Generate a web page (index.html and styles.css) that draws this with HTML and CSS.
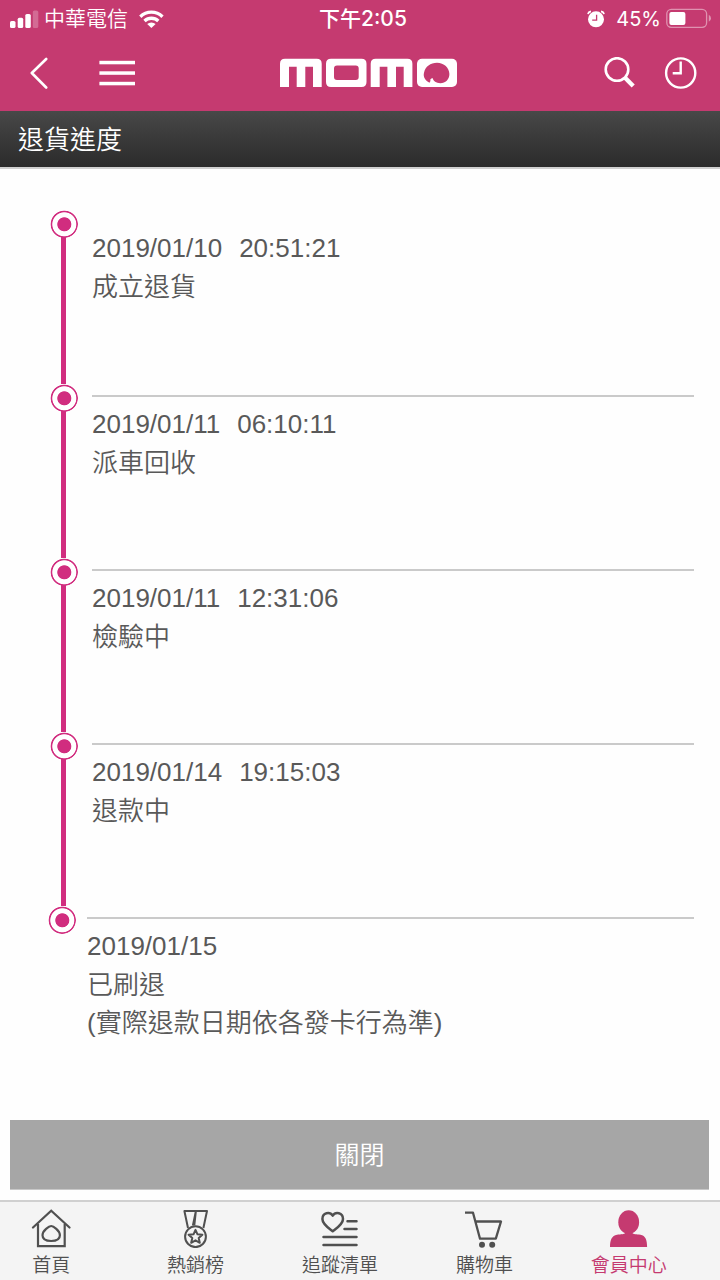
FILE: index.html
```html
<!DOCTYPE html>
<html lang="zh-Hant">

<head>
  <meta charset="UTF-8" />
  <meta name="viewport" content="width=device-width, initial-scale=1.0" />
  <title>退貨進度</title>
  <link rel="stylesheet" href="styles.css">
</head>

<body>
  <div class="container">
    <header class="head">
      <div class="status">
        <div class="status-left">
          <svg class="signal" viewBox="10 8 29 18" width="29" height="18" fill="#fff">
            <rect x="10" y="19" width="5.5" height="7" rx="1.6" />
            <rect x="17.7" y="15.7" width="5.5" height="10.3" rx="1.6" />
            <rect x="25.3" y="12" width="5.5" height="14" rx="1.6" />
            <rect x="32.8" y="8.5" width="5.5" height="17.5" rx="1.6" opacity=".25" />
          </svg>
          <span class="carrier">中華電信</span>
          <svg class="wifi" viewBox="139 8 25 18" width="25" height="18" fill="none" stroke="#fff" stroke-width="3.3">
            <path d="M140.300 14.700a16 16 0 0 1 22.200 0" />
            <path d="M144.500 19a10 10 0 0 1 13.800 0" />
            <path d="M147.200 22.100a6 6 0 0 1 8.400 0L151.400 26Z" fill="#fff" stroke="none" />
          </svg>
        </div>
        <time class="clock">下午2:05</time>
        <div class="status-right">
          <svg class="alarm" viewBox="588 8 18 18" width="18" height="18">
            <circle cx="597" cy="17.300" r="8" fill="#fff" />
            <path d="M589 12.200q.4-2.400 3-2.800M605 12.200q-.4-2.400-3-2.800" stroke="#fff" stroke-width="1.600" fill="none" />
            <path d="M597.600 12.800v5.400h-4.400" stroke="#c53a70" stroke-width="1.300" fill="none" />
          </svg>
          <span class="percent">45%</span>
          <svg class="battery" viewBox="666 7 46 21" width="46" height="21">
            <rect x="666.800" y="8.300" width="39.800" height="18" rx="4.500" fill="none" stroke="#fff" stroke-width="1.300" opacity=".45" />
            <rect x="669.400" y="11" width="16" height="13" rx="2" fill="#fff" />
            <path d="M708.800 13.800q2.200 1 2.200 3.500t-2.200 3.500Z" fill="#fff" opacity=".45" />
          </svg>
        </div>
      </div>
      <div class="bar">
        <div class="bar-left">
          <svg viewBox="30 57 18 32" width="18" height="32" fill="none" stroke="#fff" stroke-width="2.600" stroke-linecap="round" stroke-linejoin="round">
            <path d="M46.200 59L31.800 73l14.400 14.500" />
          </svg>
          <svg viewBox="99 60 36 26" width="36" height="26" fill="#fff">
            <rect x="99.400" y="60.800" width="35.600" height="3.500" />
            <rect x="99.400" y="71.300" width="35.600" height="3.500" />
            <rect x="99.400" y="81.800" width="35.600" height="3.500" />
          </svg>
        </div>
        <svg class="logo" viewBox="280 58 178 30" width="178" height="30" fill="#fff" role="img" aria-label="momo">
          <path d="M280 87V63.700q0-5 5-5h31.700q5 0 5 5V87H313V66.800h-7.700V87h-8.600V66.800H289V87Z" />
          <path fill-rule="evenodd" d="M331 58.700h30.500q5 0 5 5V82q0 5-5 5H331q-5 0-5-5V63.700q0-5 5-5ZM337 65.600q-3 0-3 3v8.500q0 3 3 3h18.700q3 0 3-3v-8.500q0-3-3-3Z" />
          <path d="M370.700 87V63.700q0-5 5-5h31.700q5 0 5 5V87h-8.700V66.800H396V87h-8.600V66.800h-7.700V87Z" />
          <rect x="417" y="58.700" width="40" height="28.300" rx="5" />
          <path d="M429.500 82.700C424.800 80.400 423 76.500 424 72.700 425.300 66.500 430.500 62.700 437 62.700c7 0 12.400 5 12.400 11.300 0 5.500-4 9.200-9 9.200-4.300 0-7.200-2-7.600-4.900q-1.200-.4-2.500 1.200.7 1.200-.8 3.200Z" fill="#c53a70" />
        </svg>
        <div class="bar-right">
          <svg viewBox="604 57 32 32" width="32" height="32" fill="none" stroke="#fff">
            <circle cx="617" cy="69.500" r="11.300" stroke-width="2.600" />
            <path d="M624.800 77.400l8.400 8.700" stroke-width="4.300" />
          </svg>
          <svg viewBox="664 57 33 32" width="33" height="32" fill="none" stroke="#fff" stroke-width="2.400">
            <circle cx="680.700" cy="73" r="14.600" />
            <path d="M680.700 61.500v11.800h-8" />
          </svg>
        </div>
      </div>
    </header>

    <h1 class="title">退貨進度</h1>

    <main>
      <ol class="timeline">
        <li class="step">
          <div class="marker"><span class="dot"></span></div>
          <div class="info">
            <div><time>2019/01/10</time><time class="hour">20:51:21</time></div>
            <p>成立退貨</p>
          </div>
        </li>
        <li class="step">
          <div class="marker"><span class="dot"></span></div>
          <div class="info">
            <div><time>2019/01/11</time><time class="hour">06:10:11</time></div>
            <p>派車回收</p>
          </div>
        </li>
        <li class="step">
          <div class="marker"><span class="dot"></span></div>
          <div class="info">
            <div><time>2019/01/11</time><time class="hour">12:31:06</time></div>
            <p>檢驗中</p>
          </div>
        </li>
        <li class="step">
          <div class="marker"><span class="dot"></span></div>
          <div class="info">
            <div><time>2019/01/14</time><time class="hour">19:15:03</time></div>
            <p>退款中</p>
          </div>
        </li>
        <li class="step last">
          <div class="marker"><span class="dot"></span></div>
          <div class="info">
            <div><time>2019/01/15</time></div>
            <p>已刷退</p>
            <p>(實際退款日期依各發卡行為準)</p>
          </div>
        </li>
      </ol>
      <button class="close" type="button">關閉</button>
    </main>

    <nav class="tabs">
      <a class="tab">
        <svg viewBox="31 1208 40 40" width="40" height="40" fill="none" stroke="#505050" stroke-width="2.200" stroke-linecap="round">
          <path d="M33 1227.500l18.200-16.700 18.300 16.700" />
          <path d="M38 1224v22.200h26.700V1224" stroke-linecap="butt" />
          <path d="M51.200 1226c2 0 8.700 4.500 8.700 9.300 0 3.700-3.300 5.700-8.700 5.700s-8.700-2-8.700-5.700c0-4.800 6.700-9.300 8.700-9.300Z" />
        </svg>
        <span>首頁</span>
      </a>
      <a class="tab">
        <svg viewBox="176 1208 40 40" width="40" height="40" fill="none" stroke="#505050" stroke-width="2" stroke-linejoin="round">
          <path d="M188 1228l-3.600-17h11.500l-1.600 14.500M195.900 1211h11.100l-3.600 17M195.900 1211l-3 14.500" />
          <circle cx="195.500" cy="1236.700" r="10.400" />
          <path d="M195.500 1229.800l2 4.500 4.900.4-3.700 3.300 1.100 4.800-4.300-2.500-4.300 2.500 1.100-4.800-3.700-3.300 4.900-.4Z" />
        </svg>
        <span>熱銷榜</span>
      </a>
      <a class="tab">
        <svg viewBox="320 1208 40 40" width="40" height="40" fill="none" stroke="#505050" stroke-width="2.500" stroke-linecap="round" stroke-linejoin="round">
          <path d="M332.700 1231.300c-2.800-2.300-10.300-6.800-10.300-12.300 0-6.500 7.500-7.700 10.300-3.300 2.800-4.400 10.300-3.200 10.300 3.300 0 5.500-7.500 10-10.300 12.300Z" />
          <path d="M347.500 1221.200h9M344.500 1229h12M323.500 1237h33M323.500 1245h33" />
        </svg>
        <span>追蹤清單</span>
      </a>
      <a class="tab">
        <svg viewBox="464.500 1208 40 40" width="40" height="40" fill="none" stroke="#505050" stroke-width="2.300">
          <path d="M465.500 1212.700h8l7 26h15.800l5.200-17.200h-25" stroke-linejoin="round" />
          <circle cx="482.500" cy="1244.700" r="3" fill="#505050" stroke="none" />
          <circle cx="492.700" cy="1244.700" r="3" fill="#505050" stroke="none" />
        </svg>
        <span>購物車</span>
      </a>
      <a class="tab active">
        <svg viewBox="609 1208 40 40" width="40" height="40" fill="#c53a70">
          <ellipse cx="628.700" cy="1222.200" rx="10.400" ry="11.900" />
          <path d="M610 1247c0-7 1.800-11.500 7-12.300 4-.6 7.500-.2 8-1.700h7.500c.5 1.500 4 1.100 8 1.700 5 .8 6.600 5.300 6.600 12.300Z" />
        </svg>
        <span>會員中心</span>
      </a>
    </nav>
  </div>
</body>

</html>
```

FILE: styles.css
```css
* {
  box-sizing: border-box;
}

body {
  margin: 0;
  background-color: #fefefe;
  font-family: "Liberation Sans", "Noto Sans CJK TC", sans-serif;
  font-weight: 350;
  color: #595959;
}

h1,
p,
ol {
  margin: 0;
  padding: 0;
  font-weight: inherit;
}

svg {
  display: block;
  flex: none;
}

.container {
  width: 720px;
  height: 1280px;
  display: flex;
  flex-direction: column;
  overflow: hidden;
}

.head {
  height: 111px;
  background-color: #c53a70;
  color: white;
}

/* status bar */
.status {
  height: 36px;
  display: grid;
  grid-template-columns: 1fr auto 1fr;
  align-items: center;
  padding: 0 9px 0 10px;
  font-family: Inter, "Noto Sans CJK TC", sans-serif;
  font-size: 21px;
  line-height: 36px;
}

.status-left,
.status-right {
  display: flex;
  align-items: center;
}

.status-right {
  justify-content: flex-end;
}

.carrier {
  margin: 1px 11px 0 5px;
}

.clock {
  font-weight: 500;
  margin-left: 5px;
  padding-top: 1px;
}

.percent {
  margin: 1px 5px 0 11px;
  font-weight: 400;
  font-size: 20px;
}

.battery {
  margin-right: -1px;
}

/* top bar */
.bar {
  height: 74px;
  display: grid;
  grid-template-columns: 1fr auto 1fr;
  align-items: center;
  padding: 0 23px 0 30px;
}

.logo {
  margin: 0 -9px 0 2px;
}

.bar-left {
  display: flex;
  align-items: center;
  gap: 51px;
}

.bar-right {
  display: flex;
  justify-content: flex-end;
  gap: 28px;
}

.title {
  height: 58px;
  padding-left: 18px;
  border-bottom: 2px solid #d0d0d0;
  background: linear-gradient(#484848, #2b2b2b);
  color: white;
  font-size: 26px;
  line-height: 58px;
}

/* return progress */
main {
  flex: 1;
  display: flex;
  flex-direction: column;
  padding: 41px 11px 10px 10px;
}

.timeline {
  flex: 1;
  list-style: none;
  padding: 0 15px 0 40px;
  font-size: 26px;
  line-height: 38px;
}

.timeline p {
  padding-top: 1px;
  margin-bottom: -1px;
}

.step {
  height: 174px;
  display: flex;
  gap: 14px;
}

.marker {
  width: 28px;
  background: linear-gradient(#d12d7f, #d12d7f) 11px 14px / 5px 100% no-repeat;
}

.dot {
  display: block;
  width: 28px;
  height: 28px;
  border-radius: 50%;
  background: radial-gradient(circle at 14.3px 14.3px, #d12d7f 6.6px, white 7.4px, white 11.6px, #d12d7f 12.4px, #d12d7f 13.2px, transparent 14px);
}

.info {
  flex: 1;
  margin-top: 11px;
  padding-top: 8px;
  border-top: 2px solid #cacaca;
}

.step:first-child .info {
  border-top: none;
}

.hour {
  margin-left: 17px;
}

.last {
  margin-left: -2px;
  gap: 11px;
}

.last .marker {
  background: none;
}

.close {
  height: 70px;
  padding: 0 0 3px;
  border: none;
  border-bottom: 1px solid #c8c8c8;
  background-color: #a6a6a6;
  color: white;
  font: inherit;
  font-size: 25px;
}

/* bottom tabs */
.tabs {
  height: 80px;
  display: flex;
  padding-right: 19px;
  border-top: 2px solid #d0d0d0;
  background-color: #f4f4f4;
  color: #505050;
}

.tab {
  flex: 1;
  display: flex;
  flex-direction: column;
  align-items: center;
  padding-top: 6px;
  font-size: 19px;
  line-height: 36px;
}

.tab:first-child {
  margin-left: -21px;
}

.active {
  color: #c53a70;
}
```
